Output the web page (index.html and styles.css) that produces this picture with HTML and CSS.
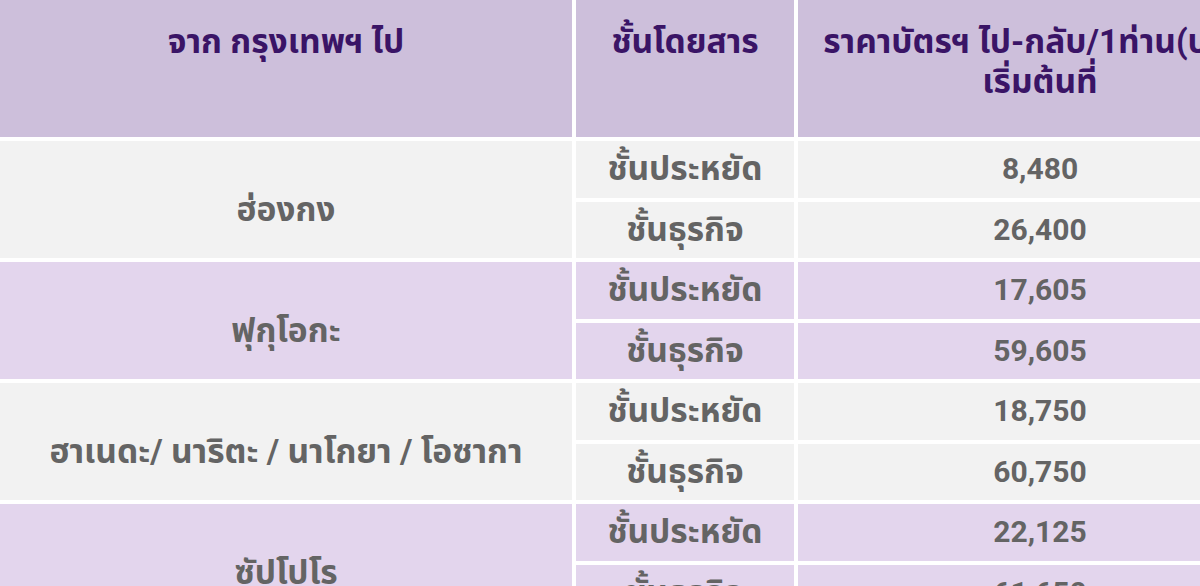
FILE: index.html
```html
<!DOCTYPE html>
<html lang="th">
<head>
<meta charset="utf-8">
<title>ราคาบัตรโดยสาร</title>
<link rel="stylesheet" href="styles.css">
</head>
<body>
<div class="fares">
  <div class="cell head">จาก กรุงเทพฯ ไป</div>
  <div class="cell head">ชั้นโดยสาร</div>
  <div class="cell head">ราคาบัตรฯ ไป-กลับ/1ท่าน(บาท)<br>เริ่มต้นที่</div>

  <div class="cell city grey">ฮ่องกง</div>
  <div class="cell grey">ชั้นประหยัด</div>
  <div class="cell grey num">8,480</div>
  <div class="cell grey">ชั้นธุรกิจ</div>
  <div class="cell grey num">26,400</div>

  <div class="cell city lilac">ฟุกุโอกะ</div>
  <div class="cell lilac">ชั้นประหยัด</div>
  <div class="cell lilac num">17,605</div>
  <div class="cell lilac">ชั้นธุรกิจ</div>
  <div class="cell lilac num">59,605</div>

  <div class="cell city grey">ฮาเนดะ/ นาริตะ / นาโกยา / โอซากา</div>
  <div class="cell grey">ชั้นประหยัด</div>
  <div class="cell grey num">18,750</div>
  <div class="cell grey">ชั้นธุรกิจ</div>
  <div class="cell grey num">60,750</div>

  <div class="cell city lilac">ซัปโปโร</div>
  <div class="cell lilac">ชั้นประหยัด</div>
  <div class="cell lilac num">22,125</div>
  <div class="cell lilac">ชั้นธุรกิจ</div>
  <div class="cell lilac num">61,650</div>
</div>
</body>
</html>
```
FILE: styles.css
```css
html, body {
  margin: 0;
  padding: 0;
  background: #ffffff;
  overflow: hidden;
}
body {
  width: 1200px;
  height: 586px;
  font-family: Roboto, "Noto Sans Thai", "Noto Sans", "DejaVu Sans", sans-serif;
  font-weight: 700;
}
.fares {
  display: grid;
  grid-template-columns: 572px 218px 484px;
  grid-template-rows: 137px repeat(8, 56.5px);
  gap: 4px;
  width: 1282px;
}
.cell {
  display: flex;
  align-items: center;
  justify-content: center;
  text-align: center;
  font-size: 33.5px;
  line-height: 40px;
  color: #646464;
  white-space: nowrap;
}
.head {
  align-items: flex-start;
  padding-top: 22px;
  background: #cdbfdb;
  color: #3a1466;
}
.city {
  grid-row: span 2;
  padding-top: 20px;
}
.grey { background: #f2f2f2; }
.lilac { background: #e3d5ed; }
.num { font-size: 30px; }
```
